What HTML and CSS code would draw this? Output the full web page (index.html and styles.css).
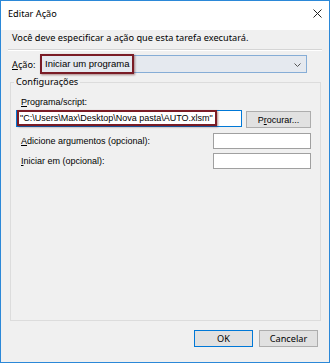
FILE: index.html
```html
<!DOCTYPE html>
<html lang="pt">
<head>
    <meta charset="UTF-8">
    <title>Editar Ação</title>
    <link rel="stylesheet" href="styles.css">
</head>
<body>
    <div class="window">
        <div class="titlebar">
            <span class="title">Editar Ação</span>
            <svg class="close" width="9" height="9" viewBox="0 0 9 9">
                <path d="M0.5 0.5 L8.5 8.5 M8.5 0.5 L0.5 8.5" stroke="#222" stroke-width="1" fill="none"/>
            </svg>
        </div>
        <div class="content">
            <div class="intro">Você deve especificar a ação que esta tarefa executará.</div>
            <div class="sep"></div>
            <div class="action-row">
                <span class="label"><u>A</u>ção:</span>
                <div class="combo">
                    <span class="mark combo-mark">Iniciar um programa</span>
                    <svg class="chevron" width="7" height="4" viewBox="0 0 7 4">
                        <path d="M0.5 0.5 L3.5 3.5 L6.5 0.5" stroke="#555" stroke-width="1" fill="none"/>
                    </svg>
                </div>
            </div>
            <fieldset class="group">
                <legend>Configurações</legend>
                <div class="group-body">
                    <div class="small-label"><u>P</u>rograma/script:</div>
                    <div class="prog-row">
                        <div class="field focused">
                            <span class="mark field-mark">"C:\Users\Max\Desktop\Nova pasta\AUTO.xlsm"</span>
                        </div>
                        <button class="btn browse">P<u>r</u>ocurar...</button>
                    </div>
                    <div class="opt-row">
                        <span class="small-label"><u>A</u>dicione argumentos (opcional):</span>
                        <div class="field short"></div>
                    </div>
                    <div class="opt-row">
                        <span class="small-label"><u>I</u>niciar em (opcional):</span>
                        <div class="field short"></div>
                    </div>
                </div>
            </fieldset>
            <div class="footer">
                <button class="btn ok">OK</button>
                <button class="btn">Cancelar</button>
            </div>
        </div>
    </div>
</body>
</html>
```
FILE: styles.css
```css
body {
    margin: 0;
    font-family: "Noto Sans", "Liberation Sans", sans-serif;
    font-size: 9.2px;
    color: #000;
}
.window {
    width: 330px;
    height: 363px;
    box-sizing: border-box;
    border: 1px solid #2b88d8;
    display: flex;
    flex-direction: column;
    background: #f0f0f0;
}
.titlebar {
    height: 29px;
    background: #fff;
    display: flex;
    align-items: center;
    justify-content: space-between;
    padding: 0 7px 0 7px;
    flex-shrink: 0;
}
.title {
    margin-top: -5px;
}
.close {
    margin-top: -5px;
}
.content {
    flex: 1;
    display: flex;
    flex-direction: column;
    padding: 0 8px 0 9px;
}
.intro {
    margin: 0 0 0 2px;
    line-height: 13px;
    height: 14px;
    padding-top: 1px;
}
.sep {
    margin: 4px 0 0 -2px;
    width: 314px;
    border-top: 1px solid #d5d5d5;
    border-bottom: 1px solid #fff;
}
.action-row {
    display: flex;
    align-items: center;
    margin-top: 4px;
    height: 18px;
}
.action-row .label {
    width: 28px;
    padding-left: 2px;
}
.combo {
    width: 267px;
    height: 18px;
    box-sizing: border-box;
    border: 1px solid #86add6;
    background: #e5e9ef;
    display: flex;
    align-items: center;
    justify-content: space-between;
    padding-right: 5px;
}
.mark {
    border: 2px solid #7a1c26;
    box-shadow: 1px 1px 2px rgba(80, 0, 0, 0.45);
    box-sizing: border-box;
    white-space: nowrap;
}
.combo-mark {
    margin: 0 0 0 -1px;
    height: 20px;
    line-height: 16px;
    padding: 0 3px 0 3px;
    font-family: "Liberation Sans", Arial, sans-serif;
    font-size: 9.5px;
    background: #e5e9ef;
}
.chevron {
    margin-top: 1px;
}
.group {
    margin: 2px 0 0 0;
    padding: 0;
    width: 311px;
    height: 246px;
    box-sizing: border-box;
    border: 1px solid #dcdcdc;
}
.group legend {
    padding: 0 2px;
    margin-left: 3px;
    line-height: 14px;
}
.group-body {
    padding: 7px 9px 0 5px;
    display: flex;
    flex-direction: column;
}
.small-label {
    font-family: "Liberation Sans", Arial, sans-serif;
    font-size: 9px;
    line-height: 12px;
}
.group-body > .small-label {
    padding-left: 5px;
}
.prog-row {
    display: flex;
    align-items: flex-start;
    margin-top: 2px;
    gap: 4px;
}
.field {
    height: 17px;
    box-sizing: border-box;
    border: 1px solid #7a7a7a;
    background: #fff;
}
.field.focused {
    width: 226px;
    border-color: #0078d7;
    display: flex;
}
.field-mark {
    margin: -1px 0 0 0;
    height: 16px;
    padding: 0 2px 0 1px;
    font-family: "Liberation Sans", Arial, sans-serif;
    font-size: 9px;
    line-height: 12px;
    background: #fff;
}
.field.short {
    width: 98px;
    height: 16px;
    border-color: #a0a0a0;
}
.opt-row {
    display: flex;
    justify-content: space-between;
    align-items: center;
    margin-top: 5px;
}
.opt-row + .opt-row {
    margin-top: 4px;
}
.opt-row .small-label {
    padding-left: 5px;
}
.btn {
    font-family: "Noto Sans", "Liberation Sans", sans-serif;
    font-size: 9.2px;
    background: #e1e1e1;
    border: 1px solid #adadad;
    padding: 0;
    height: 17px;
    line-height: 14px;
    color: #000;
}
.browse {
    width: 65px;
    margin-top: 1px;
    font-family: "Liberation Sans", Arial, sans-serif;
    font-size: 9px;
}
.footer {
    display: flex;
    justify-content: flex-end;
    gap: 6px;
    margin-top: 9px;
    padding-right: 3px;
}
.footer .btn {
    width: 59px;
    height: 17px;
}
.footer .ok {
    border-color: #0078d7;
}
```
